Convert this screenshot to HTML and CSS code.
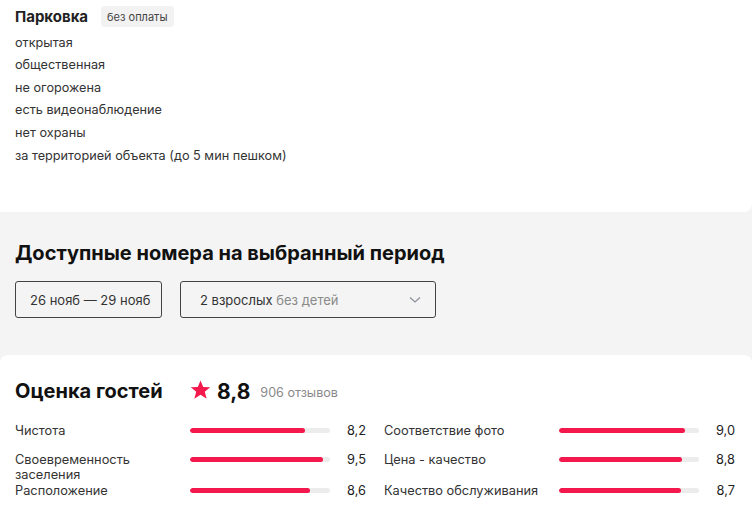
FILE: index.html
```html
<!DOCTYPE html>
<html lang="ru">
<head>
<meta charset="utf-8">
<link rel="stylesheet" href="styles.css">
</head>
<body>
<section class="card card-top">
  <div class="park-head">
    <span class="park-title">Парковка</span>
    <span class="tag">без оплаты</span>
  </div>
  <ul class="park-list">
    <li>открытая</li>
    <li>общественная</li>
    <li>не огорожена</li>
    <li>есть видеонаблюдение</li>
    <li>нет охраны</li>
    <li>за территорией объекта (до 5 мин пешком)</li>
  </ul>
</section>

<section class="rooms">
  <h2 class="rooms-title">Доступные номера на выбранный период</h2>
  <div class="rooms-inputs">
    <div class="field field-date">26 нояб — 29 нояб</div>
    <div class="field field-guests">
      <span>2 взрослых <span class="muted">без детей</span></span>
      <svg class="chev" width="12" height="8" viewBox="0 0 12 8"><path d="M1 1.5 L6 6 L11 1.5" fill="none" stroke="#8a8f99" stroke-width="1.2"/></svg>
    </div>
  </div>
</section>

<section class="card card-bottom">
  <div class="rate-head">
    <h2 class="rate-title">Оценка гостей</h2>
    <div class="rate-sum">
      <svg class="star" width="21" height="20" viewBox="0 0 24 23"><polygon points="12,0.5 15.1,8 23.2,8.4 16.9,13.6 19.1,21.5 12,17 4.9,21.5 7.1,13.6 0.8,8.4 8.9,8" fill="#f5184c"/></svg>
      <span class="rate-num">8,8</span>
      <span class="rate-count">906 отзывов</span>
    </div>
  </div>
  <div class="rate-grid">
    <div class="rate-row"><span class="r-label">Чистота</span><span class="bar"><span class="fill" style="width:82%"></span></span><span class="r-val">8,2</span></div>
    <div class="rate-row"><span class="r-label">Соответствие фото</span><span class="bar"><span class="fill" style="width:90%"></span></span><span class="r-val">9,0</span></div>
    <div class="rate-row"><span class="r-label">Своевременность заселения</span><span class="bar"><span class="fill" style="width:95%"></span></span><span class="r-val">9,5</span></div>
    <div class="rate-row"><span class="r-label">Цена - качество</span><span class="bar"><span class="fill" style="width:88%"></span></span><span class="r-val">8,8</span></div>
    <div class="rate-row"><span class="r-label">Расположение</span><span class="bar"><span class="fill" style="width:86%"></span></span><span class="r-val">8,6</span></div>
    <div class="rate-row"><span class="r-label">Качество обслуживания</span><span class="bar"><span class="fill" style="width:87%"></span></span><span class="r-val">8,7</span></div>
  </div>
</section>
</body>
</html>
```

FILE: styles.css
```css
* { box-sizing: border-box; }
html, body { margin: 0; padding: 0; }
body {
  background: #f4f4f4;
  font-family: Inter, "Noto Sans", sans-serif;
  color: #333;
  width: 752px;
  height: 525px;
  overflow: hidden;
}
.card { background: #fff; }
.card-top {
  padding: 6px 17px 45px 15px;
  border-radius: 0 0 8px 0;
}
.park-head {
  display: flex;
  align-items: center;
  gap: 13px;
}
.park-title {
  font-size: 15px;
  font-weight: 700;
  color: #222;
}
.tag {
  display: inline-flex;
  align-items: center;
  height: 21px;
  padding: 0 6px;
  background: #f2f2f2;
  border-radius: 4px;
  font-size: 11px;
  color: #444;
}
.park-list {
  list-style: none;
  margin: 4.7px 0 0;
  padding: 0;
  font-size: 12.7px;
  line-height: 22.6px;
  color: #333;
}
.rooms {
  padding: 29px 17px 37px 15px;
}
.rooms-title {
  margin: 0;
  font-size: 20px;
  line-height: 24px;
  font-weight: 700;
  color: #111;
}
.rooms-inputs {
  margin-top: 16px;
  display: flex;
  gap: 18px;
}
.field {
  height: 37px;
  border: 1px solid #444;
  border-radius: 3px;
  display: flex;
  align-items: center;
  font-size: 13px;
  color: #333;
  background: #f4f4f4;
}
.field-date { width: 147px; padding-left: 14px; }
.field-guests {
  width: 256px;
  padding: 0 14px 0 19px;
  justify-content: space-between;
}
.muted { color: #8a8a8a; }
.chev { margin-top: 1px; }
.card-bottom {
  border-radius: 8px 8px 0 0;
  padding: 22px 17px 20px 15px;
  height: 170px;
}
.rate-head {
  display: flex;
  align-items: center;
  height: 28px;
}
.rate-title {
  margin: 0;
  width: 175px;
  font-size: 20px;
  font-weight: 700;
  color: #111;
}
.rate-sum {
  display: flex;
  align-items: center;
}
.star { margin-right: 6px; margin-top: -2px; }
.rate-num {
  font-size: 21px;
  font-weight: 700;
  color: #111;
  margin-right: 10px;
}
.rate-count {
  font-size: 12.6px;
  color: #8a8a8a;
  margin-top: 3px;
}
.rate-grid {
  margin-top: 17.5px;
  display: grid;
  grid-template-columns: 351px 351px;
  column-gap: 18px;
  row-gap: 1px;
  grid-auto-rows: minmax(28px, auto);
}
.rate-row {
  display: grid;
  grid-template-columns: 175px 140px 1fr;
  align-items: start;
  font-size: 12.8px;
  line-height: 15px;
}
.r-label { color: #333; padding-right: 8px; }
.bar {
  margin-top: 5px;
  height: 5px;
  background: #ececec;
  border-radius: 3px;
  overflow: hidden;
  display: block;
}
.fill {
  display: block;
  height: 100%;
  background: #f5184c;
  border-radius: 3px;
}
.r-val { text-align: right; color: #222; }
```
